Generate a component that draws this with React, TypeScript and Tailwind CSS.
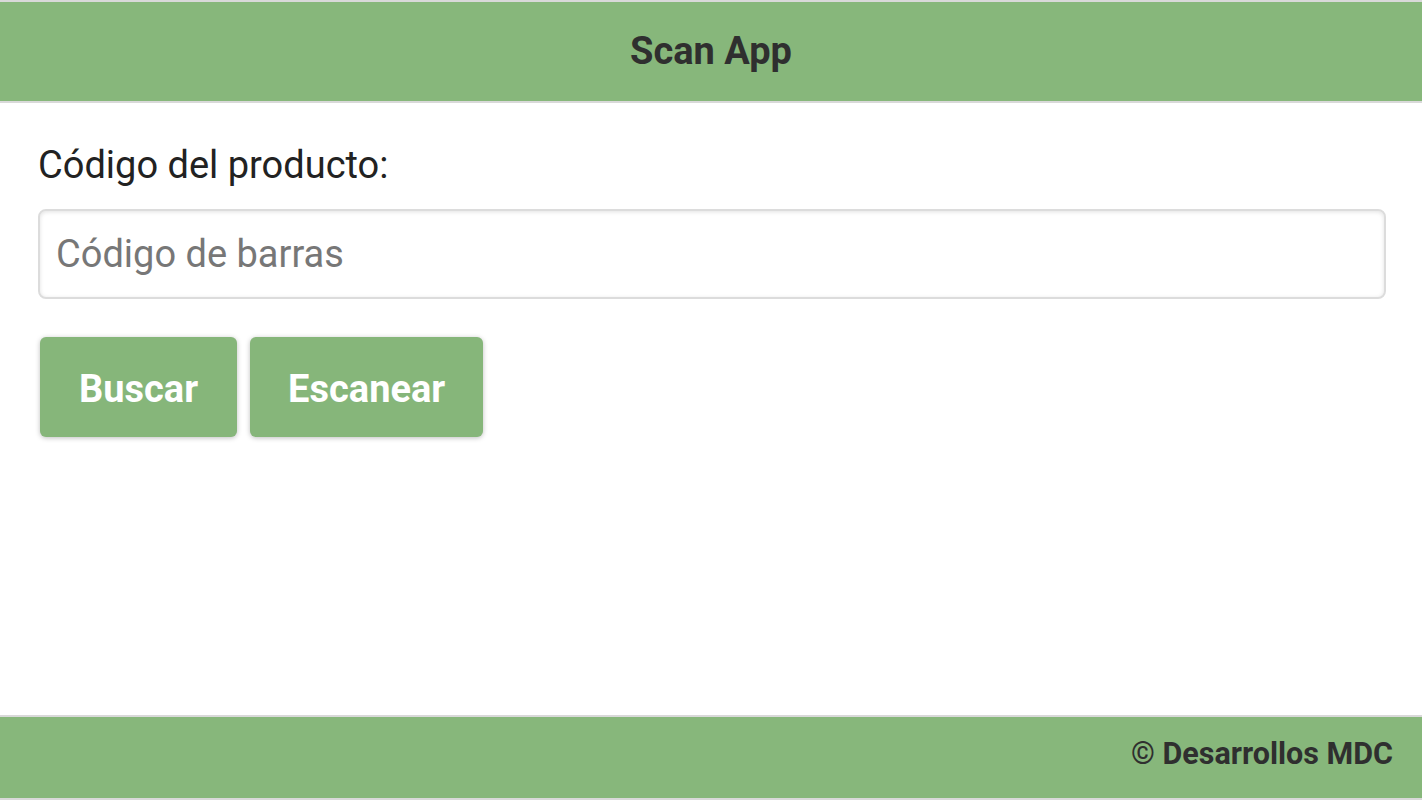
import { useState } from 'react'

export default function App() {
  const [codigo, setCodigo] = useState('')

  return (
    <div className="flex h-screen flex-col bg-white font-['Roboto',sans-serif]">
      {/* Header */}
      <header className="flex h-[103px] items-center justify-center border-y-2 border-[#d9d9d9] bg-[#87b77b]">
        <h1 className="text-[38px] font-bold text-[#2f2f2f]">Scan App</h1>
      </header>

      {/* Content */}
      <main className="flex-1 pl-[38px] pr-[36px] pt-[39px]">
        <label htmlFor="codigo" className="block text-[38px] leading-[46px] text-[#222]">
          Código del producto:
        </label>
        <input
          id="codigo"
          value={codigo}
          onChange={(e) => setCodigo(e.target.value)}
          placeholder="Código de barras"
          className="mt-[21px] h-[90px] w-full rounded-lg border-2 border-[#dcdcdc] px-[16px] text-[38px] text-[#222] shadow-[inset_0_1px_4px_rgba(0,0,0,0.12)] outline-none placeholder:text-[#777]"
        />
        <div className="mt-[38px] flex gap-[13px] pl-[2px]">
          <button className="h-[100px] rounded-md bg-[#86b67a] px-[39px] pt-[4px] text-[38px] font-bold text-white shadow-[0_1px_5px_rgba(0,0,0,0.25)]">
            Buscar
          </button>
          <button className="h-[100px] rounded-md bg-[#86b67a] px-[38px] pt-[4px] text-[38px] font-bold text-white shadow-[0_1px_5px_rgba(0,0,0,0.25)]">
            Escanear
          </button>
        </div>
      </main>

      {/* Footer */}
      <footer className="flex h-[85px] items-center justify-end border-y-2 border-[#d9d9d9] bg-[#87b77b] px-[29px] pb-[8px]">
        <span className="text-[30.5px] font-bold text-[#2f2f2f]">© Desarrollos MDC</span>
      </footer>
    </div>
  )
}
